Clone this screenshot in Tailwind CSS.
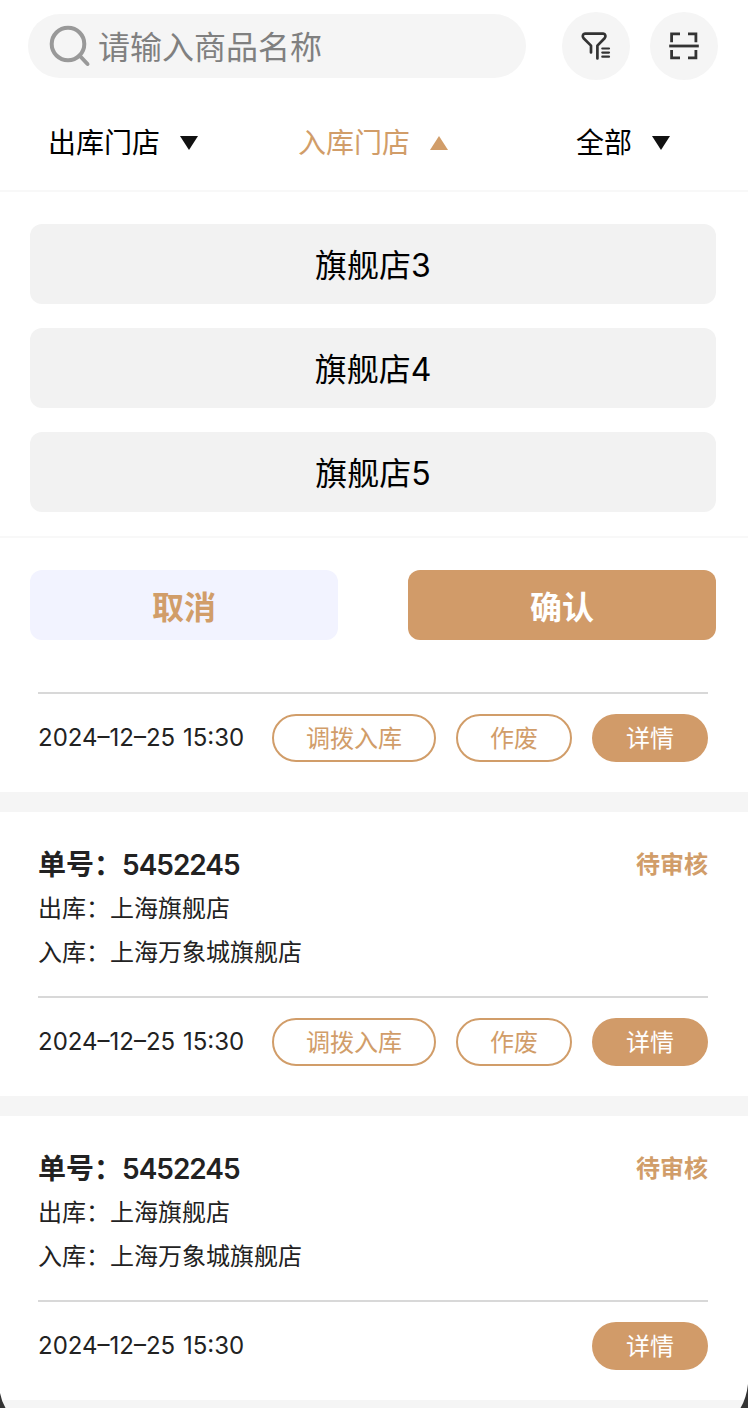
<!DOCTYPE html>
<html lang="zh-CN">
<head>
    <meta charset="UTF-8">
    <meta name="viewport" content="width=device-width, initial-scale=1.0">
    <title>调拨单</title>
    <script src="https://cdn.jsdelivr.net/npm/@tailwindcss/browser@4"></script>
</head>
<body class="relative w-[748px] h-[1408px] overflow-hidden bg-white text-black font-[Inter,'Noto_Sans_CJK_SC',sans-serif]">

    <!-- search -->
    <header class="flex items-center h-[92px] pl-7 pr-[30px]">
        <div class="flex items-center w-[498px] h-16 rounded-full bg-[#f5f5f5] pl-5">
            <svg class="w-[44px] h-[44px]" viewBox="0 0 44 44" fill="none" stroke="#999" stroke-width="4">
                <circle cx="20" cy="20" r="16.3"/>
                <path d="M31.5 31.5L39.5 40" stroke-linecap="round"/>
            </svg>
            <span class="ml-[6px] pt-[3px] text-[32px] leading-[44px] text-[#808080]">请输入商品名称</span>
        </div>
        <button class="ml-9 w-[68px] h-[68px] rounded-full bg-[#f5f5f5] flex items-center justify-center">
            <svg class="w-9 h-9" viewBox="0 0 36 36" fill="none" stroke="#333" stroke-width="2.7" stroke-linecap="round" stroke-linejoin="round">
                <path d="M13 24.5V17.6L5.6 10.2C4 8.6 4.8 5.7 6.9 5.7H25.3C27.4 5.7 28.2 8.6 26.6 10.2L19.4 17.6V30.5"/>
                <path d="M24.3 20.5H31M24.3 24.6H31M24.3 28.7H31" stroke-width="2.2"/>
            </svg>
        </button>
        <button class="ml-5 w-[68px] h-[68px] rounded-full bg-[#f5f5f5] flex items-center justify-center">
            <svg class="w-9 h-9" viewBox="0 0 36 36" fill="none" stroke="#333" stroke-width="2.8">
                <path d="M5.6 14.2V5.8H14M22 5.8H29.9V14.2M29.9 22V29.9H22M14 29.9H5.6V22"/>
                <path d="M3.2 18H32.8"/>
            </svg>
        </button>
    </header>

    <!-- filter tabs -->
    <nav class="flex h-[100px] pt-1 pl-[48px] border-b-2 border-[#f8f8f8] text-[28px] leading-[98px]">
        <div class="flex items-center w-[250px]">
            出库门店
            <svg class="ml-5 w-[18px] h-[14px]" viewBox="0 0 18 14" fill="#111"><path d="M0 0H18L9 14Z"/></svg>
        </div>
        <div class="flex items-center w-[278px] text-[#d19d69]">
            入库门店
            <svg class="ml-5 w-[18px] h-[14px]" viewBox="0 0 18 14" fill="#d19d69"><path d="M0 14H18L9 0Z"/></svg>
        </div>
        <div class="flex items-center">
            全部
            <svg class="ml-5 w-[18px] h-[14px]" viewBox="0 0 18 14" fill="#111"><path d="M0 0H18L9 14Z"/></svg>
        </div>
    </nav>

    <!-- store options -->
    <section class="flex flex-col gap-6 h-[346px] pt-8 pl-[30px] pr-8 border-b-2 border-[#f8f8f8] text-[32px] leading-[83px] text-center">
        <div class="h-20 rounded-xl bg-[#f2f2f2]">旗舰店3</div>
        <div class="h-20 rounded-xl bg-[#f2f2f2]">旗舰店4</div>
        <div class="h-20 rounded-xl bg-[#f2f2f2]">旗舰店5</div>
    </section>
    <div class="flex justify-between pt-8 pl-[30px] pr-8 text-[32px] leading-[70px] font-bold">
        <button class="w-[308px] h-[70px] pt-[3px] rounded-xl bg-[#f2f3ff] text-[#d19d69]">取消</button>
        <button class="w-[308px] h-[70px] pt-[3px] rounded-xl bg-[#d19b69] text-white">确认</button>
    </div>

    <!-- orders -->
    <main class="pt-[52px] text-[24px] text-[#222]">
        <article class="pl-[38px] pr-10 h-[100px]">
            <div class="flex items-center h-[70px] pt-5 border-t-2 border-[#d8d8d8]">
                <span class="flex-1 [word-spacing:1px] whitespace-nowrap">2024–12–25 15:30</span>
                <button class="w-[164px] h-12 pt-px rounded-3xl border-2 border-[#d19d69] text-[#d19d69]">调拨入库</button>
                <button class="ml-5 w-[116px] h-12 pt-px rounded-3xl border-2 border-[#d19d69] text-[#d19d69]">作废</button>
                <button class="ml-5 w-[116px] h-12 pt-px rounded-3xl bg-[#d19b69] text-white">详情</button>
            </div>
        </article>
        <div class="h-5 bg-[#f5f5f5]"></div>

        <article class="pl-[38px] pr-10 pt-[31px] h-[284px]">
            <div class="flex justify-between items-center h-11">
                <span class="text-[28px] font-semibold">单号：<span class="tracking-[-1px]">5452245</span></span>
                <span class="font-semibold text-[#d19d69]">待审核</span>
            </div>
            <p class="leading-[44px]">出库：上海旗舰店</p>
            <p class="leading-[44px]">入库：上海万象城旗舰店</p>
            <div class="flex items-center h-[70px] mt-[21px] pt-5 border-t-2 border-[#d8d8d8]">
                <span class="flex-1 [word-spacing:1px] whitespace-nowrap">2024–12–25 15:30</span>
                <button class="w-[164px] h-12 pt-px rounded-3xl border-2 border-[#d19d69] text-[#d19d69]">调拨入库</button>
                <button class="ml-5 w-[116px] h-12 pt-px rounded-3xl border-2 border-[#d19d69] text-[#d19d69]">作废</button>
                <button class="ml-5 w-[116px] h-12 pt-px rounded-3xl bg-[#d19b69] text-white">详情</button>
            </div>
        </article>
        <div class="h-5 bg-[#f5f5f5]"></div>

        <article class="pl-[38px] pr-10 pt-[31px] h-[284px]">
            <div class="flex justify-between items-center h-11">
                <span class="text-[28px] font-semibold">单号：<span class="tracking-[-1px]">5452245</span></span>
                <span class="font-semibold text-[#d19d69]">待审核</span>
            </div>
            <p class="leading-[44px]">出库：上海旗舰店</p>
            <p class="leading-[44px]">入库：上海万象城旗舰店</p>
            <div class="flex items-center h-[70px] mt-[21px] pt-5 border-t-2 border-[#d8d8d8]">
                <span class="flex-1 [word-spacing:1px] whitespace-nowrap">2024–12–25 15:30</span>
                <button class="w-[116px] h-12 pt-px rounded-3xl bg-[#d19b69] text-white">详情</button>
            </div>
        </article>
        <div class="h-5 bg-[#f5f5f5]"></div>
    </main>

    <!-- dark corners of the phone frame -->
    <svg class="absolute left-0 bottom-0 w-2 h-5" viewBox="0 0 8 20" fill="#333"><path d="M0 5Q1.5 13 5.5 20H0Z"/></svg>
    <svg class="absolute right-0 bottom-0 w-2 h-6" viewBox="0 0 8 24" fill="#333"><path d="M8 0Q6.5 14 .5 24H8Z"/></svg>

</body>
</html>
